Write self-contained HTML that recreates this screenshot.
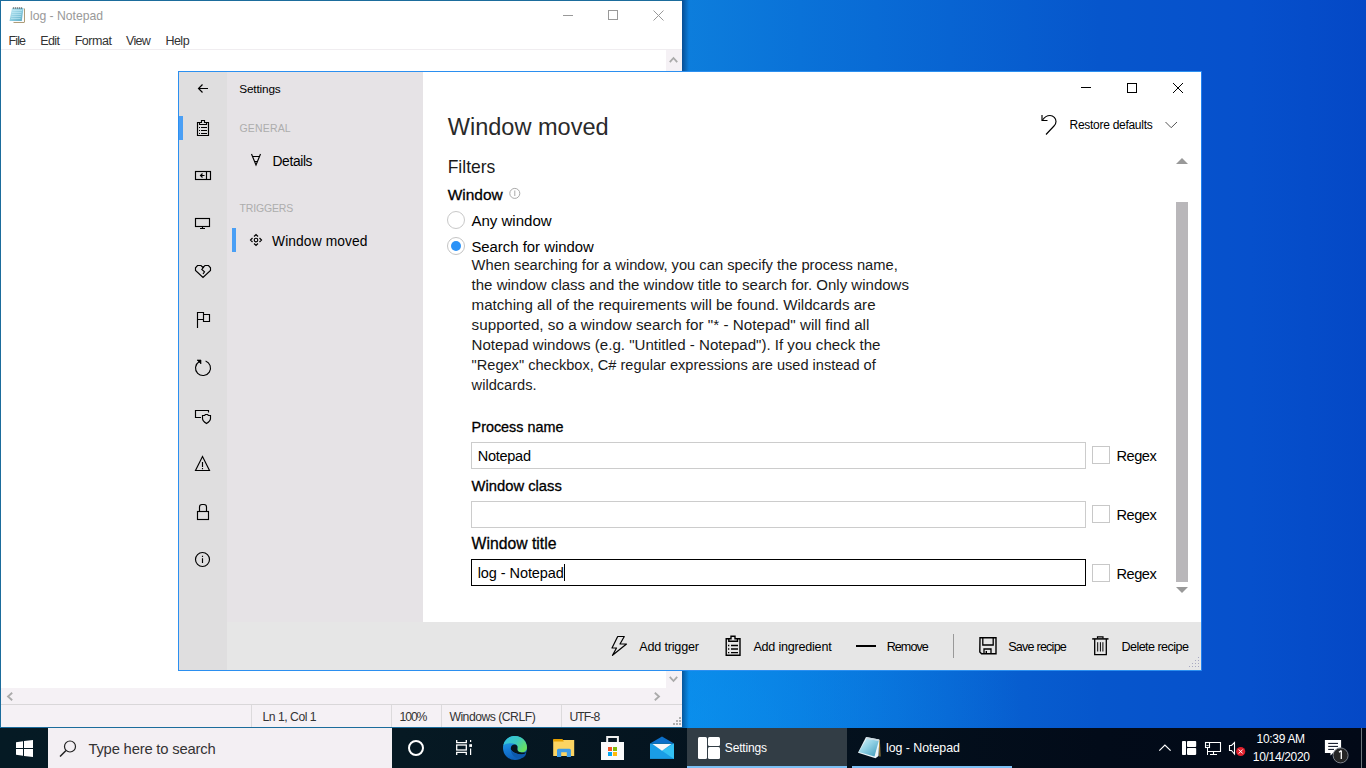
<!DOCTYPE html>
<html><head><meta charset="utf-8"><title>screen</title>
<style>
html,body{margin:0;padding:0;}
body{width:1366px;height:768px;overflow:hidden;position:relative;font-family:"Liberation Sans",sans-serif;
background:linear-gradient(90deg,rgba(0,20,60,0.45) 682px,rgba(0,20,60,0) 689px),radial-gradient(ellipse 340px 460px at 682px 745px,rgba(8,155,248,0.6),rgba(8,155,248,0) 100%),linear-gradient(90deg,#0d7edc 682px,#0a72d8 800px,#0864d2 950px,#0656cc 1100px,#0650cc 1250px,#0448c6 1366px);}
.r{position:absolute;box-sizing:content-box;}
.t{position:absolute;white-space:pre;line-height:20px;}
</style></head><body>
<div id="np" style="position:absolute;left:0;top:0;width:682px;height:728px;background:#fff;">
<div class="r" style="left:0;top:0;width:682px;height:1px;background:#1b6c9c"></div>
<div class="r" style="left:0;top:0;width:1px;height:728px;background:#1b6c9c"></div>
<div class="r" style="left:0;top:727px;width:682px;height:1px;background:#1b6c9c"></div>
<svg class="r" style="left:6px;top:4px" width="24" height="24" viewBox="6 4 24 24"><defs><linearGradient id="npg" x1="0" y1="0" x2="1" y2="1"><stop offset="0" stop-color="#c4ecf6"/><stop offset="0.5" stop-color="#8fcde0"/><stop offset="1" stop-color="#5aaac4"/></linearGradient></defs>
<path d="M13.5 22.3H24.3V8.5" stroke="#9a8458" stroke-width="1" fill="none"/>
<rect x="13" y="8.5" width="11" height="13.5" fill="#fbfbfb"/>
<path d="M12 8H23.5L21.8 21H9.5Z" fill="url(#npg)"/>
<path d="M12.5 10.5h9.5M12 12.5h9.5M11.7 14.5h9.5M11.4 16.5h9.5M11 18.5h9.5" stroke="#c8eef8" stroke-width="0.7" opacity="0.8"/>
<path d="M13.5 8.6v-1.2M15.5 8.6v-1.2M17.5 8.6v-1.2M19.5 8.6v-1.2M21.5 8.6v-1.2" stroke="#333" stroke-width="1.3"/></svg>
<div class="t" style="left:30.0px;top:6px;font-size:12.20px;color:#999;letter-spacing:-0.020px;">log - Notepad</div>
<div class="r" style="left:563px;top:15px;width:10px;height:1px;background:#999"></div>
<div class="r" style="left:608px;top:10px;width:8px;height:8px;border:1px solid #999"></div>
<svg class="r" style="left:653px;top:10px" width="11" height="11" viewBox="0 0 11 11"><path d="M0.5 0.5L10.5 10.5M10.5 0.5L0.5 10.5" stroke="#999" stroke-width="1"/></svg>
<div class="t" style="left:8.5px;top:31px;font-size:12.50px;color:#333;letter-spacing:-0.880px;">File</div>
<div class="t" style="left:40.3px;top:31px;font-size:12.50px;color:#333;letter-spacing:-0.613px;">Edit</div>
<div class="t" style="left:74.7px;top:31px;font-size:12.50px;color:#333;letter-spacing:-0.457px;">Format</div>
<div class="t" style="left:126.0px;top:31px;font-size:12.50px;color:#333;letter-spacing:-0.689px;">View</div>
<div class="t" style="left:165.4px;top:31px;font-size:12.50px;color:#333;letter-spacing:-0.502px;">Help</div>
<div class="r" style="left:1px;top:49px;width:681px;height:1px;background:#f0edf0"></div>
<div class="r" style="left:666px;top:50px;width:16px;height:638px;background:#f5f1f5"></div>
<svg class="r" style="left:669px;top:56px" width="9" height="7" viewBox="0 0 9 7"><path d="M0.8 6.2 L4.5 2 L8.2 6.2" stroke="#aaa" stroke-width="1.8" fill="none"/></svg>
<svg class="r" style="left:669px;top:676px" width="9" height="7" viewBox="0 0 9 7"><path d="M0.8 0.8 L4.5 5 L8.2 0.8" stroke="#aaa" stroke-width="1.8" fill="none"/></svg>
<div class="r" style="left:1px;top:688px;width:681px;height:16px;background:#f5f1f5"></div>
<svg class="r" style="left:6px;top:692px" width="7" height="9" viewBox="0 0 7 9"><path d="M6.2 0.8 L2 4.5 L6.2 8.2" stroke="#aaa" stroke-width="1.8" fill="none"/></svg>
<svg class="r" style="left:654px;top:692px" width="7" height="9" viewBox="0 0 7 9"><path d="M0.8 0.8 L5 4.5 L0.8 8.2" stroke="#aaa" stroke-width="1.8" fill="none"/></svg>
<div class="r" style="left:1px;top:704px;width:681px;height:1px;background:#d9d7d9"></div>
<div class="r" style="left:1px;top:705px;width:681px;height:22px;background:#f5f1f5"></div>
<div class="r" style="left:251px;top:705px;width:1px;height:22px;background:#dcdadc"></div>
<div class="r" style="left:391px;top:705px;width:1px;height:22px;background:#dcdadc"></div>
<div class="r" style="left:441px;top:705px;width:1px;height:22px;background:#dcdadc"></div>
<div class="r" style="left:561px;top:705px;width:1px;height:22px;background:#dcdadc"></div>
<div class="t" style="left:262.5px;top:707px;font-size:12.20px;color:#333;letter-spacing:-0.480px;">Ln 1, Col 1</div>
<div class="t" style="left:399.6px;top:707px;font-size:12.20px;color:#333;letter-spacing:-1.134px;">100%</div>
<div class="t" style="left:449.4px;top:707px;font-size:12.20px;color:#333;letter-spacing:-0.497px;">Windows (CRLF)</div>
<div class="t" style="left:569.4px;top:707px;font-size:12.20px;color:#333;letter-spacing:-0.940px;">UTF-8</div>
<div class="r" style="left:679px;top:717px;width:2px;height:2px;background:#b0b0b0"></div>
<div class="r" style="left:676px;top:720px;width:2px;height:2px;background:#b0b0b0"></div>
<div class="r" style="left:679px;top:720px;width:2px;height:2px;background:#b0b0b0"></div>
<div class="r" style="left:673px;top:723px;width:2px;height:2px;background:#b0b0b0"></div>
<div class="r" style="left:676px;top:723px;width:2px;height:2px;background:#b0b0b0"></div>
<div class="r" style="left:679px;top:723px;width:2px;height:2px;background:#b0b0b0"></div>
</div>
<div id="sw" class="r" style="left:178px;top:71px;width:1023px;height:600px;background:#fff;">
</div>
<div class="r" style="left:178px;top:71px;width:1023px;height:1px;background:#2b8ff0"></div>
<div class="r" style="left:178px;top:71px;width:1px;height:600px;background:#2b8ff0"></div>
<div class="r" style="left:178px;top:670px;width:1024px;height:1px;background:#2b8ff0"></div>
<div class="r" style="left:1201px;top:71px;width:1px;height:600px;background:#2382ee"></div>
<div class="r" style="left:179px;top:72px;width:48px;height:598px;background:#dfdedf"></div>
<div class="r" style="left:227px;top:72px;width:196px;height:550px;background:#e6e3e6"></div>
<div class="r" style="left:227px;top:622px;width:974px;height:48px;background:#e6e6e6"></div>
<div class="r" style="left:179px;top:116px;width:4px;height:24px;background:#4a9ff5"></div>
<div class="r" style="left:232px;top:228px;width:4px;height:24px;background:#4a9ff5"></div>
<svg class="r" style="left:190px;top:76px" width="24" height="24" viewBox="190 76 24 24"><path d="M208 88.5H198.5M202.5 84.5L198.5 88.5L202.5 92.5" stroke="#000" stroke-width="1.15" fill="none"/></svg>
<svg class="r" style="left:190px;top:116px" width="24" height="24" viewBox="190 116 24 24"><path d="M197.5 122.5H201.5V120.5H204.5V122.5H208.5V135.5H197.5Z" stroke="#000" stroke-width="1.15" fill="none"/><path d="M199.5 122.5V124.5H206.5V122.5" stroke="#000" stroke-width="1.15" fill="none"/><path d="M199 127.5h1M201 127.5h6M199 130.5h1M201 130.5h6M199 133.5h1M201 133.5h6" stroke="#000" stroke-width="1.15" fill="none"/></svg>
<svg class="r" style="left:190px;top:163px" width="24" height="24" viewBox="190 163 24 24"><rect x="195.5" y="171.5" width="15" height="8" stroke="#000" stroke-width="1.15" fill="none"/><path d="M206.5 171.5V179.5M204.5 175.5H200M202.5 173.5L200.5 175.5L202.5 177.5" stroke="#000" stroke-width="1.15" fill="none"/></svg>
<svg class="r" style="left:190px;top:211px" width="24" height="24" viewBox="190 211 24 24"><rect x="195.5" y="218.5" width="14" height="8" stroke="#000" stroke-width="1.15" fill="none"/><path d="M202.5 226.5V228.5M200 228.5H205" stroke="#000" stroke-width="1.15" fill="none"/></svg>
<svg class="r" style="left:190px;top:259px" width="24" height="24" viewBox="190 259 24 24"><path d="M203 267.5L201 265.5H197.5L195.5 267.8V270.5L203 277.5L210.5 270.5V267.8L208.5 265.5H205Z" stroke="#000" stroke-width="1.15" fill="none"/><path d="M203.8 267L201.8 269.5L204.5 271.8L203 274" stroke="#000" stroke-width="1.15" fill="none"/></svg>
<svg class="r" style="left:190px;top:307px" width="24" height="24" viewBox="190 307 24 24"><path d="M197.5 328V312.5H203.5V319.5H197.5M203.5 314.5H209.5V321.5H203.5V319.5" stroke="#000" stroke-width="1.15" fill="none"/></svg>
<svg class="r" style="left:190px;top:355px" width="24" height="24" viewBox="190 355 24 24"><path d="M205.6 361A7.5 7.5 0 1 1 199 361.7" stroke="#000" stroke-width="1.15" fill="none"/><path d="M197 360H201V364Z" fill="#000" stroke="#000" stroke-width="0.6"/></svg>
<svg class="r" style="left:190px;top:403px" width="24" height="24" viewBox="190 403 24 24"><path d="M201 417.5H195.5V410.5H208.5V412.5" stroke="#000" stroke-width="1.15" fill="none"/><path d="M202.5 415.5H204.5L205.5 414.5H207.5L208.5 415.5H210.5V418.5Q210.5 421 206.5 423.5Q202.5 421 202.5 418.5Z" stroke="#000" stroke-width="1.15" fill="none"/></svg>
<svg class="r" style="left:190px;top:451px" width="24" height="24" viewBox="190 451 24 24"><path d="M202.5 456.5L209.5 470.5H195.5Z" stroke="#000" stroke-width="1.15" fill="none"/><path d="M202.5 462V467M202.5 468V469.3" stroke="#000" stroke-width="1.15" fill="none"/></svg>
<svg class="r" style="left:190px;top:499px" width="24" height="24" viewBox="190 499 24 24"><rect x="197.5" y="511.5" width="11" height="8" stroke="#000" stroke-width="1.15" fill="none"/><path d="M199.5 511.5V507Q199.5 504.5 202 504.5H204Q206.5 504.5 206.5 507V511.5" stroke="#000" stroke-width="1.15" fill="none"/></svg>
<svg class="r" style="left:190px;top:547px" width="24" height="24" viewBox="190 547 24 24"><circle cx="202.5" cy="559.5" r="7" stroke="#000" stroke-width="1.15" fill="none"/><path d="M202.5 558.3V563M202.5 555.8V557" stroke="#000" stroke-width="1.15" fill="none"/></svg>
<div class="t" style="left:239.3px;top:79px;font-size:11.80px;color:#000;letter-spacing:-0.176px;">Settings</div>
<div class="t" style="left:239.5px;top:118px;font-size:10.50px;color:#adadad;letter-spacing:0.169px;">GENERAL</div>
<svg class="r" style="left:244px;top:148px" width="24" height="24" viewBox="244 148 24 24"><path d="M251.5 154L256 165L260.5 154M252 156.5H260M254.5 161.5H257.5" stroke="#000" stroke-width="1.15" fill="none"/></svg>
<div class="t" style="left:272.5px;top:152px;font-size:13.80px;color:#000;letter-spacing:-0.363px;">Details</div>
<div class="t" style="left:239.5px;top:198px;font-size:10.50px;color:#adadad;letter-spacing:-0.148px;">TRIGGERS</div>
<svg class="r" style="left:244px;top:228px" width="24" height="24" viewBox="244 228 24 24"><circle cx="256" cy="240" r="1.8" stroke="#000" stroke-width="1.15" fill="none"/><path d="M254 236.5L256 234.5L258 236.5M254 243.5L256 245.5L258 243.5M252.5 238L250.5 240L252.5 242M259.5 238L261.5 240L259.5 242" stroke="#000" stroke-width="1.15" fill="none"/></svg>
<div class="t" style="left:272.0px;top:232px;font-size:13.80px;color:#000;letter-spacing:0.106px;">Window moved</div>
<div class="r" style="left:1081px;top:87px;width:10px;height:1px;background:#000"></div>
<div class="r" style="left:1127px;top:83px;width:8px;height:8px;border:1px solid #000"></div>
<svg class="r" style="left:1173px;top:83px" width="10" height="10" viewBox="0 0 10 10"><path d="M0 0L10 10M10 0L0 10" stroke="#000" stroke-width="1"/></svg>
<svg class="r" style="left:1036px;top:110px" width="24" height="30" viewBox="1036 110 24 30"><path d="M1042 115V120.5H1047.5" stroke="#000" stroke-width="1.15" fill="none"/><path d="M1042.5 120C1044.5 117 1047 115.5 1050 115.5C1053.5 115.5 1056 118.5 1056 121.5C1056 123 1055.5 124.5 1054 126L1046 134.5" stroke="#000" stroke-width="1.15" fill="none"/></svg>
<div class="t" style="left:1069.5px;top:115px;font-size:12.00px;color:#000;letter-spacing:-0.278px;">Restore defaults</div>
<svg class="r" style="left:1160px;top:115px" width="24" height="20" viewBox="1160 115 24 20"><path d="M1165.5 122L1171.2 127.7L1177 122" stroke="#555" stroke-width="1" fill="none"/></svg>
<div class="t" style="left:447.7px;top:117px;font-size:23.55px;color:#2a2a2a;">Window moved</div>
<div class="t" style="left:447.7px;top:157px;font-size:17.49px;color:#1a1a1a;">Filters</div>
<div class="t" style="left:447.7px;top:185px;font-size:15.46px;color:#000;-webkit-text-stroke:0.3px #000;">Window</div>
<svg class="r" style="left:504px;top:184px" width="22" height="20" viewBox="504 184 22 20"><circle cx="514.8" cy="193.4" r="5" stroke="#aaa" fill="none" stroke-width="1"/><path d="M514.8 190.5V196" stroke="#aaa" stroke-width="1"/></svg>
<div class="r" style="left:447px;top:211px;width:16px;height:16px;border:1px solid #c8c8c8;border-radius:50%"></div>
<div class="r" style="left:447px;top:237px;width:16px;height:16px;border:1px solid #c4c4c4;border-radius:50%"></div>
<div class="r" style="left:451px;top:241px;width:10px;height:10px;background:#2a92f7;border-radius:50%"></div>
<div class="t" style="left:471.4px;top:211px;font-size:15.05px;color:#000;">Any window</div>
<div class="t" style="left:471.4px;top:237px;font-size:14.88px;color:#000;">Search for window</div>
<div class="t" style="left:471.6px;top:255px;font-size:14.69px;color:#1a1a1a;">When searching for a window, you can specify the process name,</div>
<div class="t" style="left:471.6px;top:275px;font-size:15.02px;color:#1a1a1a;">the window class and the window title to search for. Only windows</div>
<div class="t" style="left:471.6px;top:295px;font-size:15.12px;color:#1a1a1a;">matching all of the requirements will be found. Wildcards are</div>
<div class="t" style="left:471.6px;top:315px;font-size:15.24px;color:#1a1a1a;">supported, so a window search for &quot;* - Notepad&quot; will find all</div>
<div class="t" style="left:471.6px;top:335px;font-size:15.08px;color:#1a1a1a;">Notepad windows (e.g. &quot;Untitled - Notepad&quot;). If you check the</div>
<div class="t" style="left:471.6px;top:355px;font-size:14.58px;color:#1a1a1a;">&quot;Regex&quot; checkbox, C# regular expressions are used instead of</div>
<div class="t" style="left:471.6px;top:375px;font-size:14.62px;color:#1a1a1a;">wildcards.</div>
<div class="t" style="left:471.6px;top:417px;font-size:14.36px;color:#000;-webkit-text-stroke:0.3px #000;">Process name</div>
<div class="r" style="left:471px;top:442px;width:613px;height:25px;border:1px solid #ccc;background:#fff"></div>
<div class="t" style="left:477.7px;top:446px;font-size:14.50px;color:#000;letter-spacing:-0.253px;">Notepad</div>
<div class="r" style="left:1092px;top:446px;width:16px;height:16px;border:1px solid #c8c8c8;background:#fff"></div>
<div class="t" style="left:1116.5px;top:446px;font-size:14.60px;color:#000;letter-spacing:-0.475px;">Regex</div>
<div class="t" style="left:471.6px;top:476px;font-size:14.76px;color:#000;-webkit-text-stroke:0.3px #000;">Window class</div>
<div class="r" style="left:471px;top:501px;width:613px;height:25px;border:1px solid #ccc;background:#fff"></div>
<div class="r" style="left:1092px;top:505px;width:16px;height:16px;border:1px solid #c8c8c8;background:#fff"></div>
<div class="t" style="left:1116.5px;top:505px;font-size:14.60px;color:#000;letter-spacing:-0.475px;">Regex</div>
<div class="t" style="left:471.6px;top:534px;font-size:15.75px;color:#000;-webkit-text-stroke:0.3px #000;">Window title</div>
<div class="r" style="left:471px;top:559px;width:613px;height:25px;border:1px solid #000;background:#fff"></div>
<div class="t" style="left:477.7px;top:563px;font-size:14.50px;color:#000;letter-spacing:-0.071px;">log - Notepad</div>
<div class="r" style="left:1092px;top:564px;width:16px;height:16px;border:1px solid #c8c8c8;background:#fff"></div>
<div class="t" style="left:1116.5px;top:564px;font-size:14.60px;color:#000;letter-spacing:-0.475px;">Regex</div>
<div class="r" style="left:564px;top:564px;width:1px;height:17px;background:#000"></div>
<svg class="r" style="left:1176px;top:158px" width="12" height="6" viewBox="0 0 12 6"><path d="M0 6L6 0L12 6Z" fill="#999"/></svg>
<div class="r" style="left:1176px;top:202px;width:12px;height:380px;background:#b9b7ba"></div>
<svg class="r" style="left:1176px;top:587px" width="12" height="6" viewBox="0 0 12 6"><path d="M0 0L6 6L12 0Z" fill="#999"/></svg>
<svg class="r" style="left:606px;top:632px" width="26" height="26" viewBox="606 632 26 26"><path d="M617.7 636.5H624.3L620 644H626.5L612.5 655.3L616.5 648H612Z" stroke="#000" stroke-width="1.2" fill="none" stroke-linejoin="round"/></svg>
<div class="t" style="left:639.3px;top:637px;font-size:12.60px;color:#000;letter-spacing:-0.193px;">Add trigger</div>
<svg class="r" style="left:720px;top:632px" width="28" height="28" viewBox="720 632 28 28"><path d="M726.2 638.7H731V636.3H735V638.7H740V655.3H726.2Z" stroke="#000" stroke-width="1.4" fill="none"/><path d="M728.8 638.7V641.3H737.5V638.7" stroke="#000" stroke-width="1.4" fill="none"/><path d="M728 645.5h1.3M731 645.5h7M728 649h1.3M731 649h7M728 652.6h1.3M731 652.6h7" stroke="#000" stroke-width="1.3"/></svg>
<div class="t" style="left:753.4px;top:637px;font-size:12.60px;color:#000;letter-spacing:-0.227px;">Add ingredient</div>
<div class="r" style="left:856px;top:645px;width:20px;height:2px;background:#000"></div>
<div class="t" style="left:886.7px;top:637px;font-size:12.60px;color:#000;letter-spacing:-0.963px;">Remove</div>
<div class="r" style="left:953px;top:634px;width:1px;height:24px;background:#999"></div>
<svg class="r" style="left:975px;top:632px" width="26" height="26" viewBox="975 632 26 26"><path d="M980 637.8H996V653.8H981.6L979.8 652Z" stroke="#000" stroke-width="1.4" fill="none"/><path d="M982.8 638V645H993.2V638" stroke="#000" stroke-width="1.3" fill="none"/><path d="M984 654V649H991V654" stroke="#000" stroke-width="1.3" fill="none"/><rect x="985.6" y="651" width="1.4" height="2" fill="#000"/></svg>
<div class="t" style="left:1008.2px;top:637px;font-size:12.60px;color:#000;letter-spacing:-0.783px;">Save recipe</div>
<svg class="r" style="left:1087px;top:632px" width="26" height="26" viewBox="1087 632 26 26"><path d="M1092.2 638.9H1108.5" stroke="#000" stroke-width="1.5"/><path d="M1097.5 638.5V636.8H1103V638.5" stroke="#000" stroke-width="1.2" fill="none"/><path d="M1094.7 639V654.7H1106.3V639" stroke="#000" stroke-width="1.3" fill="none"/><path d="M1097.7 642.2V651.5M1100.4 642.2V651.5M1102.9 642.2V651.5" stroke="#000" stroke-width="1"/></svg>
<div class="t" style="left:1121.4px;top:637px;font-size:12.60px;color:#000;letter-spacing:-0.553px;">Delete recipe</div>
<div class="r" style="left:1198px;top:657px;width:1px;height:1px;background:#a8a8c0"></div>
<div class="r" style="left:1195px;top:660px;width:1px;height:1px;background:#a8a8c0"></div>
<div class="r" style="left:1198px;top:660px;width:1px;height:1px;background:#a8a8c0"></div>
<div class="r" style="left:1192px;top:663px;width:1px;height:1px;background:#a8a8c0"></div>
<div class="r" style="left:1195px;top:663px;width:1px;height:1px;background:#a8a8c0"></div>
<div class="r" style="left:1198px;top:663px;width:1px;height:1px;background:#a8a8c0"></div>
<div class="r" style="left:1189px;top:666px;width:1px;height:1px;background:#a8a8c0"></div>
<div class="r" style="left:1192px;top:666px;width:1px;height:1px;background:#a8a8c0"></div>
<div class="r" style="left:1195px;top:666px;width:1px;height:1px;background:#a8a8c0"></div>
<div class="r" style="left:1198px;top:666px;width:1px;height:1px;background:#a8a8c0"></div>
<div class="r" style="left:0;top:728px;width:1366px;height:40px;background:linear-gradient(90deg,#051a24 0px,#061923 400px,#04121e 800px,#020b19 1100px,#020917 1366px)"></div>
<svg class="r" style="left:16px;top:740px" width="17" height="17" viewBox="0 0 17 17"><path d="M0 2.3L7 1.3V8H0Z M8 1.1L17 0V8H8Z M0 9H7V15.7L0 14.7Z M8 9H17V17L8 15.9Z" fill="#fff"/></svg>
<div class="r" style="left:48px;top:728px;width:344px;height:40px;background:#f3eff3"></div>
<svg class="r" style="left:59px;top:740px" width="18" height="17" viewBox="0 0 18 17"><circle cx="11" cy="6.5" r="5.5" stroke="#222" stroke-width="1.2" fill="none"/><path d="M7 10.5L1 16.5" stroke="#222" stroke-width="1.5"/></svg>
<div class="t" style="left:88.4px;top:739px;font-size:14.80px;color:#333;letter-spacing:-0.194px;">Type here to search</div>
<div class="r" style="left:408px;top:740px;width:12px;height:12px;border:2px solid #fff;border-radius:50%"></div>
<svg class="r" style="left:448px;top:732px" width="32" height="32" viewBox="448 732 32 32"><path d="M456.7 740V742.6H466.3V740M456.7 755V752.4H466.3V755" stroke="#fff" stroke-width="1.3" fill="none"/><rect x="456.7" y="745" width="9.6" height="5" stroke="#fff" stroke-width="1.3" fill="none"/><path d="M470.6 740V742M470.6 748.5V755" stroke="#fff" stroke-width="1.2"/><rect x="469.3" y="744.2" width="2.7" height="2.7" fill="#fff"/></svg>
<svg class="r" style="left:499px;top:732px" width="32" height="32" viewBox="499 732 32 32"><defs><linearGradient id="eg" x1="0" y1="0" x2="0.3" y2="1"><stop offset="0" stop-color="#2ab4ee"/><stop offset="0.6" stop-color="#1479d4"/><stop offset="1" stop-color="#0e5fb8"/></linearGradient>
<linearGradient id="eg2" x1="0" y1="0" x2="1" y2="0.6"><stop offset="0" stop-color="#2fc0e6"/><stop offset="0.55" stop-color="#3cc8c0"/><stop offset="1" stop-color="#68e060"/></linearGradient></defs>
<circle cx="515" cy="748" r="12" fill="url(#eg)"/>
<path d="M503.3 745.5C504.5 739 509.5 736 515 736C522 736 527 741.5 527 747.5C527 751 524.5 752.5 521.5 752.5C518.5 752.5 517 751 517.3 749C517.6 747 518 745.5 515.5 744.3C511.5 742.5 505.5 743 503.3 745.5Z" fill="url(#eg2)"/>
<path d="M510.8 748.5C510.8 746 512.5 744.6 514.6 744.6C516.8 744.6 518 746.3 517.4 748.5C517 750.5 518.5 752.3 521.5 752.5L526.2 752.5C525.5 753.5 525 754 524.5 754.3C522 754.8 519 754.5 516.5 753.5C513 752.2 510.8 750.5 510.8 748.5Z" fill="#07141d"/>
<path d="M510.8 748.5C510.5 753.5 514 758 519 758.5C521.5 758.8 523.5 757.5 524.5 756.5C525.5 755.5 526 754.5 526.2 752.5C524.5 754.5 521 755 517.5 754C514 753 511 751.5 510.8 748.5Z" fill="#0d58ac"/></svg>
<svg class="r" style="left:548px;top:732px" width="32" height="32" viewBox="548 732 32 32"><rect x="553.2" y="740" width="21" height="16" fill="#fcd462"/><path d="M553.2 739H562.5L563.8 741.5H553.2Z" fill="#e6a000"/><path d="M557 757V750.2Q557 748.7 558.5 748.7H569.4Q570.9 748.7 570.9 750.2V757H566.8V752.3H561.2V757Z" fill="#3e9be6"/></svg>
<svg class="r" style="left:596px;top:732px" width="32" height="32" viewBox="596 732 32 32"><path d="M607.2 742.5V737H617.9V742.5" stroke="#f0f0f0" stroke-width="2" fill="none"/><rect x="601" y="742" width="23" height="18" fill="#fafafa"/><rect x="608" y="747" width="4" height="4" fill="#f35325"/><rect x="613" y="747" width="4" height="4" fill="#81bc06"/><rect x="608" y="752" width="4" height="4" fill="#05a6f0"/><rect x="613" y="752" width="4" height="4" fill="#ffba08"/></svg>
<svg class="r" style="left:645px;top:732px" width="32" height="32" viewBox="645 732 32 32"><path d="M650 743.5L662 736.4L674 743.5Z" fill="#0b6fc9"/><rect x="650" y="743.5" width="24" height="15.4" fill="#1a9de6"/><path d="M662 750.8L674 743.5V758.9Z" fill="#33c1f3"/><path d="M652.5 744H671.5L662 750.8Z" fill="#f8f8f8"/></svg>
<div class="r" style="left:687px;top:728px;width:160px;height:40px;background:#323d45"></div>
<div class="r" style="left:687px;top:766px;width:160px;height:2px;background:#7cc0f5"></div>
<svg class="r" style="left:698px;top:737px" width="22" height="22" viewBox="0 0 22 22"><rect x="0" y="0" width="9" height="22" rx="1.5" fill="#fff"/><rect x="10" y="0" width="12" height="9" rx="1.5" fill="#fff"/><rect x="10" y="10" width="12" height="12" rx="1.5" fill="#fff"/></svg>
<div class="t" style="left:724.8px;top:738px;font-size:12.00px;color:#fff;letter-spacing:-0.151px;">Settings</div>
<div class="r" style="left:852px;top:766px;width:160px;height:2px;background:#7cc0f5"></div>
<svg class="r" style="left:852px;top:732px" width="32" height="32" viewBox="852 732 32 32"><defs><linearGradient id="npt" x1="0" y1="0" x2="1" y2="1"><stop offset="0" stop-color="#d8f4fb"/><stop offset="0.45" stop-color="#8fd0e4"/><stop offset="1" stop-color="#3d98b8"/></linearGradient></defs>
<path d="M879.3 740L880 756.5" stroke="#a8863a" stroke-width="1.2"/>
<path d="M866 737L879.3 739.5L878.5 756L875.5 758.3L858 752.8Z" fill="#eef6fa"/>
<path d="M866.5 738.8L878.8 740.8L874.5 756.5L858.7 752Z" fill="url(#npt)"/>
<path d="M866 737L879.3 739.5L879 741L866.3 738.8Z" fill="#c8d8e0"/></svg>
<div class="t" style="left:886.0px;top:738px;font-size:12.40px;color:#fff;letter-spacing:-0.037px;">log - Notepad</div>
<svg class="r" style="left:1152px;top:734px" width="52" height="28" viewBox="1152 734 52 28"><path d="M1159.3 750.6L1164.9 745L1170.6 750.6" stroke="#fff" stroke-width="1.2" fill="none"/><rect x="1182" y="741" width="4" height="14" rx="0.8" fill="#fff"/><rect x="1187" y="741" width="9.2" height="6" rx="0.8" fill="#fff"/><rect x="1187" y="748" width="9.2" height="6.9" rx="0.8" fill="#fff"/></svg>
<svg class="r" style="left:1200px;top:734px" width="52" height="28" viewBox="1200 734 52 28"><path d="M1209.5 742.5H1220.5V751.5H1207.5M1213.5 751.5V754.5M1210 754.5H1217" stroke="#fff" stroke-width="1.1" fill="none"/><rect x="1205.5" y="742.5" width="4" height="5" stroke="#fff" stroke-width="1.1" fill="#03101c"/><path d="M1206.6 745L1207.5 746L1208.4 745M1207.5 747.5V755" stroke="#fff" stroke-width="1" fill="none"/><path d="M1229.5 745.5H1231.5L1234.5 742.5V754L1231.5 750.5H1229.5Z" stroke="#fff" stroke-width="1.1" fill="none"/><circle cx="1240.7" cy="751.5" r="4.6" fill="#e0202c"/><path d="M1238.7 749.5L1242.7 753.5M1242.7 749.5L1238.7 753.5" stroke="#fff" stroke-width="1"/></svg>
<div class="t" style="left:1256.6px;top:729px;font-size:12.00px;color:#fff;letter-spacing:-0.314px;">10:39 AM</div>
<div class="t" style="left:1252.8px;top:747px;font-size:12.00px;color:#fff;letter-spacing:-0.317px;">10/14/2020</div>
<svg class="r" style="left:1316px;top:732px" width="50" height="36" viewBox="1316 732 50 36"><path d="M1324.9 740H1341.1V753H1333L1330.5 755.5V753H1324.9Z" fill="#fff"/><path d="M1328.2 743.4H1338M1328.2 746.4H1338M1328.2 749.4H1334" stroke="#03091a" stroke-width="1"/><circle cx="1340.6" cy="755.4" r="7.5" fill="#252525" stroke="#7a7f88" stroke-width="1"/><path d="M1341.3 750.5V759M1339 752.3L1341.3 750.5" stroke="#fff" stroke-width="1.3" fill="none"/></svg>
<div class="r" style="left:1361px;top:728px;width:1px;height:40px;background:#6c767c"></div>
</body></html>
